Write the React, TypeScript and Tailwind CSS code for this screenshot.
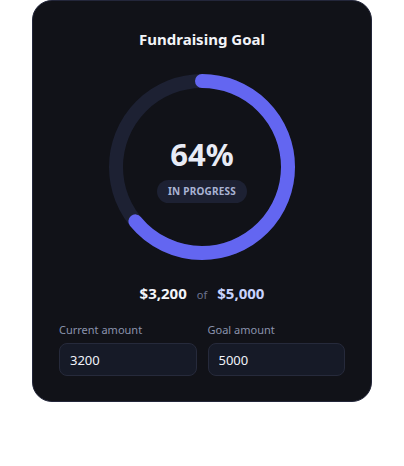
const percent = 64;
const radius = 86;
const circumference = 2 * Math.PI * radius;

const Ring = () => (
  <div className="relative h-[186px] w-[186px]">
    <svg width="186" height="186" viewBox="0 0 186 186" className="-rotate-90">
      <circle cx="93" cy="93" r={radius} fill="none" stroke="#1d2133" strokeWidth="14" />
      <circle
        cx="93"
        cy="93"
        r={radius}
        fill="none"
        stroke="#6366f1"
        strokeWidth="14"
        strokeLinecap="round"
        strokeDasharray={circumference}
        strokeDashoffset={circumference * (1 - percent / 100)}
      />
    </svg>
    <div className="absolute inset-0 flex flex-col items-center justify-center pt-[8px]">
      <span className="text-[31px] font-bold leading-none text-[#e8ebf5]">{percent}%</span>
      <span className="mt-[10px] rounded-full bg-[#1d2133] px-[11px] py-[4px] text-[10px] font-bold tracking-[0.02em] text-[#a9b3d3]">
        IN PROGRESS
      </span>
    </div>
  </div>
);

const Field = ({ label, value }: { label: string; value: string }) => (
  <label className="flex flex-1 flex-col">
    <span className="mb-[5px] text-[11px] text-[#8b93ad]">{label}</span>
    <input
      defaultValue={value}
      className="h-[33px] w-full rounded-lg border border-[#262a3b] bg-[#161a27] px-[10px] text-[13px] text-[#f1f3f9] outline-none"
    />
  </label>
);

export default function App() {
  return (
    <div className="min-h-[466px] bg-white pl-[32px]" style={{ fontFamily: '"Noto Sans", "Open Sans", sans-serif' }}>
      <div className="flex w-[340px] flex-col items-center rounded-[20px] border border-[#23263a] bg-[#111218] px-[26px] pb-[25px] pt-[27px]">
        <h2 className="text-[15px] font-bold leading-[22px] text-[#f3f4f8]">Fundraising Goal</h2>
        <div className="mt-[24px]">
          <Ring />
        </div>
        <div className="mt-[22px] flex items-baseline gap-[10px]">
          <span className="text-[15px] font-bold text-[#f3f4f8]">$3,200</span>
          <span className="text-[11px] text-[#6b7290]">of</span>
          <span className="text-[15px] font-bold text-[#c7d2fe]">$5,000</span>
        </div>
        <div className="mt-[17px] flex w-full gap-[11px]">
          <Field label="Current amount" value="3200" />
          <Field label="Goal amount" value="5000" />
        </div>
      </div>
    </div>
  );
}
